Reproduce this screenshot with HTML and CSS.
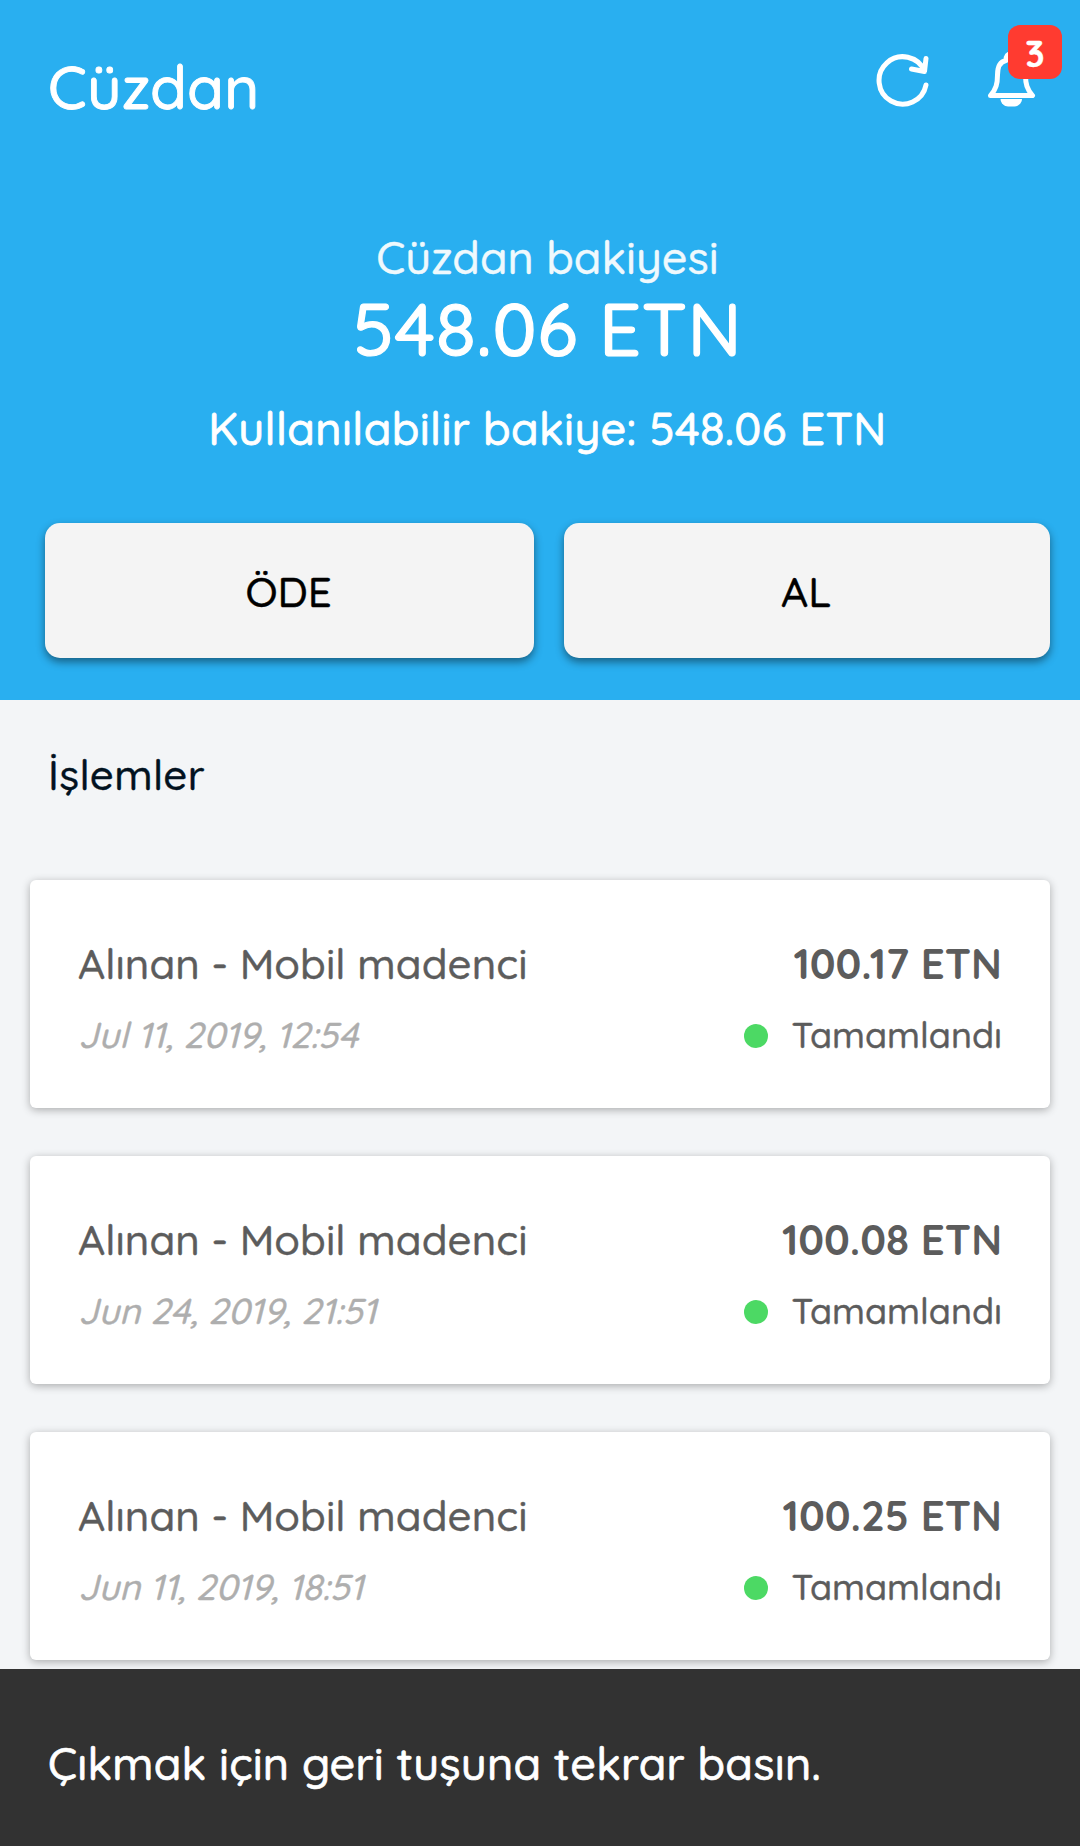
FILE: index.html
```html
<!DOCTYPE html>
<html lang="tr">

<head>
  <meta charset="utf-8" />
  <meta name="viewport" content="width=device-width, initial-scale=1.0" />
  <title>Cüzdan</title>

  <link rel="stylesheet" href="styles.css">
</head>

<body>
  <div id="wallet">
    <header class="top">
      <div class="bar">
        <h1>Cüzdan</h1>
        <div class="icons">
          <svg class="refresh" width="56" height="56" viewBox="0 0 56 56">
            <path d="M51 33A23.700 23.700 0 1 1 49.500 19M51 6.500L49.500 19.500L36.500 17" />
          </svg>
          <div class="bell">
            <svg width="50" height="60" viewBox="0 0 50 60">
              <path d="M4.500 48.500C10 42 11.500 37 11.500 28C11.500 19 14 14.500 20 13.500C20 9 22 7 25 7C28 7 30 9 30 13.500C36 14.500 39.500 19 39.500 28C39.500 37 41 42 46.500 48.500Z" />
              <path class="clapper" d="M14.500 52H36C36 56 32 59.500 28.500 59.500H22C18.500 59.500 14.500 56 14.500 52Z" />
            </svg>
            <span class="badge">3</span>
          </div>
        </div>
      </div>

      <div class="balance">
        <p class="label">Cüzdan bakiyesi</p>
        <p class="total">548.06 ETN</p>
        <p class="available">Kullanılabilir bakiye: 548.06 ETN</p>
      </div>

      <div class="buttons">
        <button class="pay">ÖDE</button>
        <button class="receive">AL</button>
      </div>
    </header>

    <main class="list">
      <h2>İşlemler</h2>

      <div class="card">
        <div class="row">
          <span class="name">Alınan - Mobil madenci</span>
          <span class="amount">100.17 ETN</span>
        </div>
        <div class="row small">
          <span class="date">Jul 11, 2019, 12:54</span>
          <span class="status">Tamamlandı</span>
        </div>
      </div>

      <div class="card">
        <div class="row">
          <span class="name">Alınan - Mobil madenci</span>
          <span class="amount">100.08 ETN</span>
        </div>
        <div class="row small">
          <span class="date">Jun 24, 2019, 21:51</span>
          <span class="status">Tamamlandı</span>
        </div>
      </div>

      <div class="card">
        <div class="row">
          <span class="name">Alınan - Mobil madenci</span>
          <span class="amount">100.25 ETN</span>
        </div>
        <div class="row small">
          <span class="date">Jun 11, 2019, 18:51</span>
          <span class="status">Tamamlandı</span>
        </div>
      </div>
    </main>

    <div class="toast"><span>Çıkmak için geri tuşuna tekrar basın.</span></div>
  </div>
</body>

</html>
```
FILE: styles.css
```css
* {
  box-sizing: border-box;
}

body {
  margin: 0;
  background-color: #f3f5f7;
  font-family: Quicksand, Lato, sans-serif;
  font-size: 42px;
  font-weight: 500;
  -webkit-text-stroke: .4px;
}

h1, h2, p {
  margin: 0;
  font-weight: 500;
}

#wallet {
  display: flex;
  flex-direction: column;
  width: 1080px;
  height: 1846px;
  overflow: hidden;
}

/* header */
.top {
  flex: none;
  height: 700px;
  background-color: #29aff0;
  color: #fff;
}

.bar {
  display: flex;
  justify-content: space-between;
  height: 232px;
  padding: 52px 44px 0 48px;
}

.bar h1 {
  font-size: 60px;
  line-height: 69px;
  letter-spacing: .2px;
  -webkit-text-stroke: .9px;
}

.icons {
  display: flex;
  gap: 55px;
}

.icons svg {
  display: block;
  fill: none;
  stroke: #fff;
  stroke-width: 5;
  stroke-linecap: round;
  stroke-linejoin: round;
}

.bell {
  position: relative;
  margin-top: -5px;
}

.icons .clapper {
  fill: #fff;
  stroke: none;
}

.badge {
  position: absolute;
  top: -22px;
  left: 22px;
  width: 54px;
  height: 54px;
  border-radius: 12px;
  background-color: #ff3b30;
  font-size: 36px;
  font-weight: 700;
  line-height: 58px;
  text-align: center;
}

.balance {
  padding-left: 15px;
  font-size: 45px;
  text-align: center;
}

.label {
  line-height: 51px;
  opacity: .93;
}

.balance .total {
  font-size: 74px;
  line-height: 92px;
  letter-spacing: .6px;
  -webkit-text-stroke: 1.2px;
}

.balance .available {
  margin-top: 28px;
  line-height: 50px;
  letter-spacing: .4px;
  -webkit-text-stroke: .8px;
}

.buttons {
  display: flex;
  gap: 30px;
  margin-top: 70px;
  padding: 0 30px 0 45px;
}

.buttons button {
  width: 486px;
  height: 135px;
  padding: 2px 2px 0 0;
  border: 0;
  border-radius: 15px;
  background-color: #f4f4f4;
  box-shadow: 0 4px 9px rgba(0, 0, 0, .45);
  color: #000;
  font: inherit;
}

.buttons .pay {
  width: 489px;
}

/* transactions */
.list {
  flex: 1;
  min-height: 0;
  padding: 0 30px;
}

.list h2 {
  height: 180px;
  padding: 50px 18px 0;
  color: #02121f;
  font-size: 42px;
  line-height: 50px;
  letter-spacing: .4px;
}

.card {
  height: 228px;
  margin-bottom: 48px;
  padding: 59px 48px 0 48px;
  border-radius: 6px;
  background-color: #fff;
  box-shadow: 0 2px 9px rgba(0, 0, 0, .3);
  color: #5c5c5c;
}

.row {
  display: flex;
  justify-content: space-between;
  line-height: 50px;
}

.small {
  margin-top: 24px;
  font-size: 36px;
  line-height: 44px;
}

.amount {
  font-weight: 700;
  -webkit-text-stroke: 0;
}

.name,
.date {
  letter-spacing: .08px;
}

.date {
  color: #aeaeae;
  font-style: italic;
}

.status {
  display: flex;
  align-items: center;
}

.status::before {
  content: "";
  width: 24px;
  height: 24px;
  margin: 2px 24px 0 0;
  border-radius: 50%;
  background-color: #4cd964;
}

.toast {
  position: relative;
  flex: none;
  height: 177px;
  padding: 69px 48px 0;
  background-color: #323232;
  color: #fff;
  font-size: 45px;
  line-height: 50px;
  letter-spacing: .22px;
  -webkit-text-stroke: .7px;
}
```
